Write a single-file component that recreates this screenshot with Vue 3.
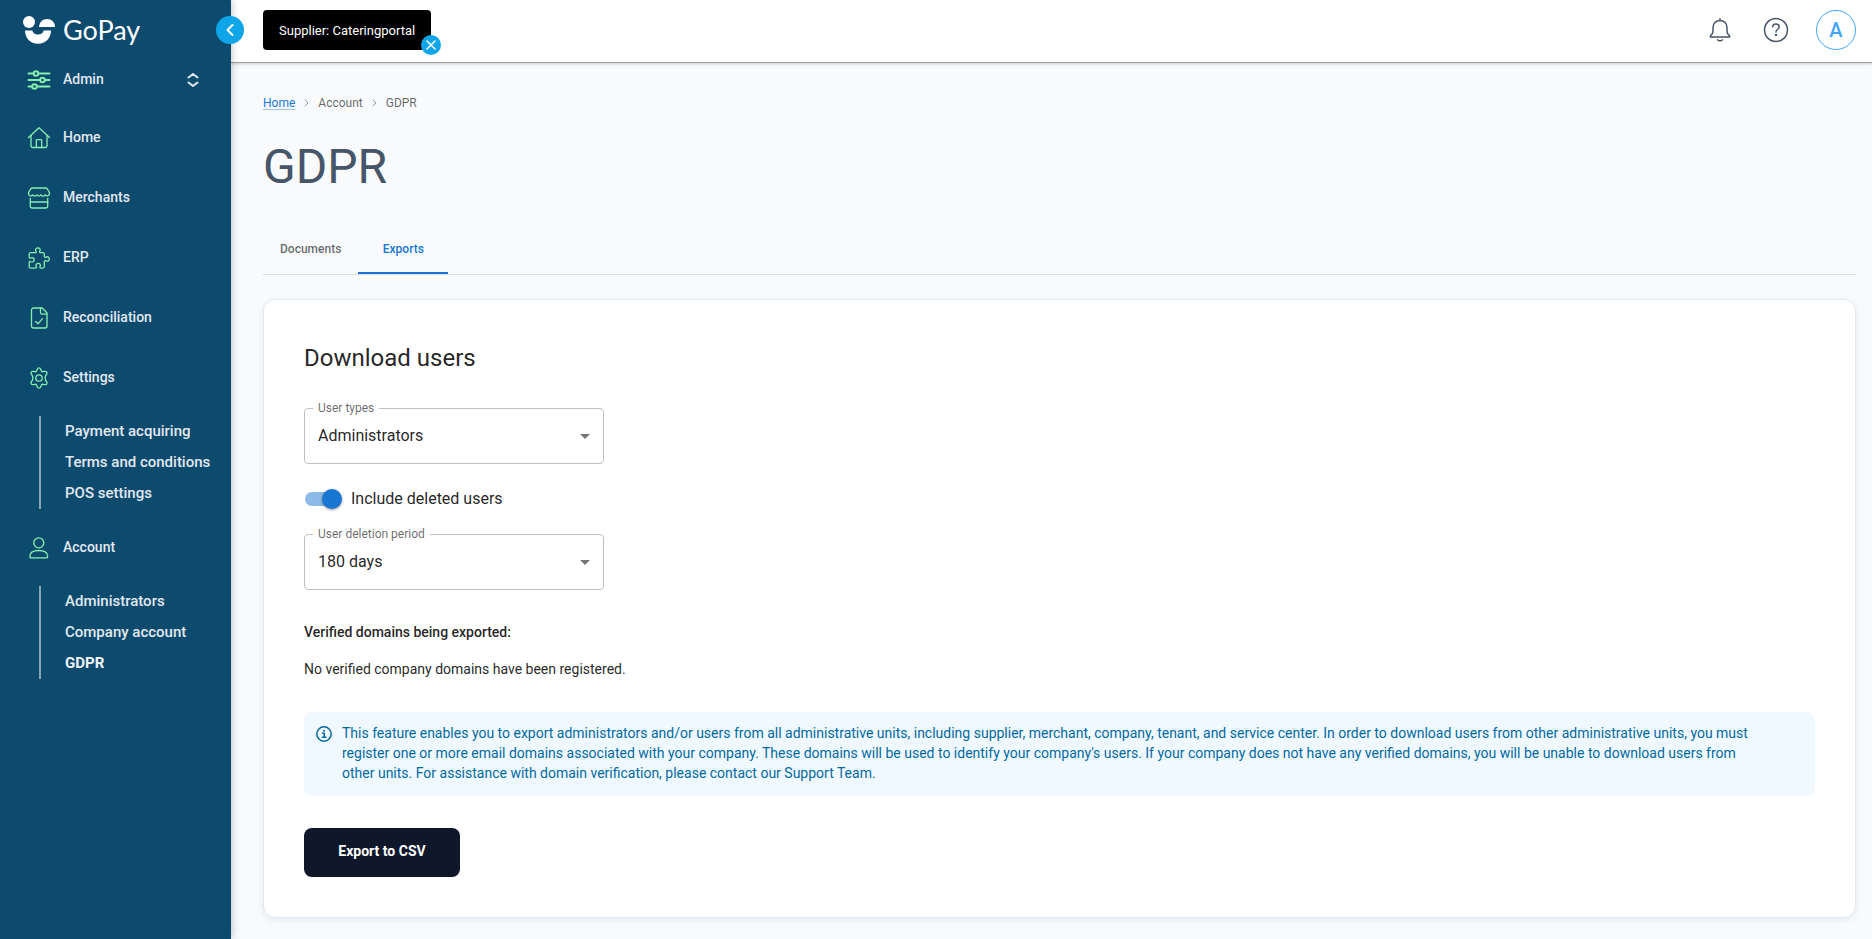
<script setup>
import { ref } from 'vue'

const nav = [
  { label: 'Home', icon: 'home' },
  { label: 'Merchants', icon: 'store' },
  { label: 'ERP', icon: 'puzzle' },
  { label: 'Reconciliation', icon: 'file' },
  { label: 'Settings', icon: 'gear', children: ['Payment acquiring', 'Terms and conditions', 'POS settings'] },
  { label: 'Account', icon: 'user', children: ['Administrators', 'Company account', 'GDPR'] },
]

const icons = {
  home: ['M1.5 11.5 12 1.8l10.500 9.700', 'M4 9.500V19.500a2 2 0 0 0 2 2h12a2 2 0 0 0 2-2V9.500', 'M9.300 21.500v-7a.8.8 0 0 1 .8-.8h3.800a.8.8 0 0 1 .8.8v7'],
  store: ['M5.300 2h13.400a2 2 0 0 1 1.600.9L22.400 6.500q.500 2.500-1.200 3.200-2 .6-2.900-.9-1.100 1.600-2.600 1.300-1.200-.1-1.800-1.300-.7 1.300-1.900 1.300-1.300 0-2-1.300-.7 1.300-1.900 1.300-1.500.1-2.400-1.300-1.200 1.500-2.900.9-1.700-.7-1.200-3.200L3.700 2.900A2 2 0 0 1 5.300 2z', 'M3.300 12.500V20a2 2 0 0 0 2 2h13.400a2 2 0 0 0 2-2v-7.500', 'M3.300 16h17.400'],
  puzzle: ['M2.200 8.200a1.500 1.500 0 0 1 1.500-1.500h4.600c.9 0 1.200-.9.700-1.600-.9-1.500.1-3.300 1.900-3.300s2.800 1.800 1.900 3.300c-.5.7-.2 1.600.7 1.600h2.300a1.500 1.500 0 0 1 1.500 1.500v2.100c0 1 .9 1.300 1.700.8 1.600-.9 3.300.1 3.300 1.900s-1.700 2.800-3.300 1.900c-.8-.5-1.700-.2-1.700.8v4.900a1.500 1.500 0 0 1-1.500 1.500h-2c-.9 0-1.200-.8-.7-1.600.9-1.500-.1-3.200-1.900-3.200s-2.800 1.700-1.900 3.200c.5.8.2 1.600-.7 1.600H3.700a1.500 1.500 0 0 1-1.500-1.500v-4.100c0-1 .9-1.300 1.700-.8 1.600.9 3.300-.1 3.300-1.900s-1.700-2.800-3.300-1.900c-.8.5-1.700.2-1.700-.8z'],
  file: ['M6.500 2h8.700L20 7v13a2 2 0 0 1-2 2H6.500a2 2 0 0 1-2-2V4a2 2 0 0 1 2-2z', 'M13.500 2.200v4.500a1.500 1.500 0 0 0 1.500 1.500h4.800', 'm8.800 15.500 2.400 2.200 4.300-5'],
  gear: ['M10.300 3.200c.6-1.700 2.800-1.700 3.400 0l.5 1.300c.3.9 1.200 1.400 2.100 1.200l1.500-.3c1.700-.3 2.900 1.500 1.800 2.900l-.9 1.200c-.6.7-.6 4.300 0 5l.9 1.200c1.100 1.400-.1 3.200-1.800 2.900l-1.500-.3c-.9-.2-1.800.3-2.100 1.200l-.5 1.300c-.6 1.700-2.800 1.700-3.400 0l-.5-1.300c-.3-.9-1.200-1.400-2.100-1.200l-1.500.3c-1.700.3-2.900-1.500-1.800-2.900l.9-1.200c.6-.7.6-4.300 0-5l-.9-1.200C3.300 6.900 4.500 5.100 6.200 5.400l1.500.3c.9.2 1.800-.3 2.100-1.200z', 'M15.200 12a3.200 3.200 0 1 1-6.400 0 3.200 3.200 0 0 1 6.400 0z'],
  user: ['M16.800 6.800a5 5 0 1 1-10 0 5 5 0 0 1 10 0z', 'M2.800 20.500c0-3.700 3-6 8.900-6s9 2.300 9 6c0 .9-.5 1.400-1.300 1.400H4.100c-.8 0-1.300-.5-1.300-1.400z'],
}

const tab = ref('Exports')
const userType = ref('Administrators')
const includeDeleted = ref(true)
const period = ref('180 days')
</script>

<template>
  <div class="app">
    <aside class="sidebar">
      <a class="logo" href="#" aria-label="GoPay">
        <svg width="32" height="28" viewBox="0 0 32 28" fill="#fff" aria-hidden="true">
          <circle cx="6" cy="6" r="6" />
          <path d="M16 11c.4-4.800 3.500-8 8-8s7.700 3.200 8 7.300q0 .7-.7.7z" />
          <path d="M2 14.500h7.300c.8 2.500 2.500 4 5.700 4s5-1.500 5.700-4H28c0 7.500-5.300 13.300-13 13.300S2 22 2 14.500z" />
        </svg>
        <span>GoPay</span>
      </a>
      <button class="switcher" type="button">
        <svg class="icon" viewBox="0 0 24 24" stroke-width="2" aria-hidden="true">
          <path d="M1.500 5.500h5m5 0h11M1.500 12h11.500m5 0h4.500M1.500 18.500h3.500m5 0h12.500" />
          <circle cx="9" cy="5.500" r="2.300" /><circle cx="15.500" cy="12" r="2.300" /><circle cx="7.500" cy="18.500" r="2.300" />
        </svg>
        <span>Admin</span>
        <svg class="sort" width="12" height="14" viewBox="0 0 12 14" aria-hidden="true"><path d="M1.500 4.500 6 1l4.500 3.500M1.500 9.500 6 13l4.500-3.500" /></svg>
      </button>
      <nav>
        <template v-for="item in nav" :key="item.label">
          <a class="item" href="#">
            <svg class="icon" viewBox="0 0 24 24" stroke-width="1.300" aria-hidden="true">
              <path v-for="d in icons[item.icon]" :key="d" :d="d" />
            </svg>
            <span>{{ item.label }}</span>
          </a>
          <div v-if="item.children" class="sub">
            <a v-for="c in item.children" :key="c" href="#" :class="{ current: c === 'GDPR' }">{{ c }}</a>
          </div>
        </template>
      </nav>
      <button class="collapse" type="button" aria-label="Collapse menu">
        <svg width="28" height="28" viewBox="0 0 28 28" aria-hidden="true"><path d="M16.500 9 11.500 14l5 5" /></svg>
      </button>
    </aside>

    <div class="page">
      <header class="top">
        <div class="context">
          Supplier: Cateringportal
          <button type="button" aria-label="Clear supplier">
            <svg width="20" height="20" viewBox="0 0 20 20" aria-hidden="true"><path d="m6 6 8 8m0-8-8 8" /></svg>
          </button>
        </div>
        <div class="tools">
          <button type="button" aria-label="Notifications">
            <svg width="24" height="24" viewBox="0 0 24 24" aria-hidden="true">
              <path d="M12 .8v1.700M12 2.500c4.200 0 7 3 7 7v3.500c0 2.500 1 3.300 2.300 4.600.8.8.4 1.500-.5 1.500H3.200c-.9 0-1.300-.7-.5-1.500C4 16.300 5 15.500 5 13V9.500c0-4 2.800-7 7-7z" />
              <path d="M9.700 21.800c.8 1.400 3.800 1.400 4.600 0" />
            </svg>
          </button>
          <button type="button" aria-label="Help">
            <svg width="26" height="26" viewBox="0 0 26 26" aria-hidden="true">
              <circle cx="13" cy="13" r="11.500" />
              <path d="M9.700 9.800c0-1.800 1.400-2.800 3.200-2.800s3.300 1 3.300 2.900c0 2.300-3.200 2.400-3.200 5" />
              <circle cx="13" cy="17.900" r=".5" />
            </svg>
          </button>
          <button class="avatar" type="button" aria-label="User menu">A</button>
        </div>
      </header>

      <main>
        <nav class="crumbs" aria-label="Breadcrumb">
          <a href="#">Home</a>
          <svg width="5" height="8" viewBox="0 0 5 8" aria-hidden="true"><path d="m1 1 3 3-3 3" /></svg>
          <span>Account</span>
          <svg width="5" height="8" viewBox="0 0 5 8" aria-hidden="true"><path d="m1 1 3 3-3 3" /></svg>
          <span>GDPR</span>
        </nav>
        <h1>GDPR</h1>
        <div class="tabs" role="tablist">
          <button v-for="t in ['Documents', 'Exports']" :key="t" type="button" role="tab" :aria-selected="tab === t" :class="{ active: tab === t }" @click="tab = t">{{ t }}</button>
        </div>

        <section class="card">
          <h2>Download users</h2>
          <div class="field">
            <label for="types">User types</label>
            <select id="types" v-model="userType"><option>Administrators</option></select>
            <svg width="24" height="24" viewBox="0 0 24 24" aria-hidden="true"><path d="m7 10 5 5 5-5z" /></svg>
          </div>
          <label class="toggle">
            <input v-model="includeDeleted" type="checkbox" role="switch">
            <span>Include deleted users</span>
          </label>
          <div class="field">
            <label for="period">User deletion period</label>
            <select id="period" v-model="period"><option>180 days</option></select>
            <svg width="24" height="24" viewBox="0 0 24 24" aria-hidden="true"><path d="m7 10 5 5 5-5z" /></svg>
          </div>
          <h3>Verified domains being exported:</h3>
          <p class="none">No verified company domains have been registered.</p>
          <div class="alert">
            <svg width="16" height="16" viewBox="0 0 16 16" aria-hidden="true">
              <circle cx="8" cy="8" r="7.200" />
              <path d="M6.500 7.200h1.800v4M6.300 11.200h3.700" /><circle class="dot" cx="8" cy="4.700" r="1" />
            </svg>
            <p>This feature enables you to export administrators and/or users from all administrative units, including supplier, merchant, company, tenant, and service center. In order to download users from other administrative units, you must register one or more email domains associated with your company. These domains will be used to identify your company's users. If your company does not have any verified domains, you will be unable to download users from other units. For assistance with domain verification, please contact our Support Team.</p>
          </div>
          <button class="export" type="button">Export to CSV</button>
        </section>
      </main>
    </div>
  </div>
</template>

<style>
body { background: #f8fafc; }
</style>

<style scoped>
* { box-sizing: border-box; }
.app { display: flex; min-height: 100vh; font-family: Roboto, sans-serif; color: rgba(0, 0, 0, 0.87); background: #f8fafc; }
button { font: inherit; color: inherit; border: 0; padding: 0; background: none; cursor: pointer; }
a { color: inherit; text-decoration: none; }
svg { display: block; flex: none; fill: none; stroke-linecap: round; stroke-linejoin: round; }
h1, h2, h3, p { margin: 0; }

.sidebar { position: relative; z-index: 2; flex: none; width: 231px; background: #0c4a6e; color: #e2e8f0; box-shadow: 0 0 8px rgba(15, 23, 42, 0.3); font-size: 14px; font-weight: 500; }
.logo { display: flex; gap: 8px; height: 52px; padding: 16px 0 0 23px; color: #fff; font: 400 27px/28px Lato, sans-serif; }
.logo svg { fill: #fff; }
.icon { width: 24px; height: 24px; stroke: #86efac; }
.switcher { display: flex; align-items: center; gap: 12px; width: 100%; height: 56px; padding: 0 32px 0 27px; }
.switcher span { flex: 1; text-align: left; }
.sort { stroke: #e2e8f0; stroke-width: 2; }
.item { display: flex; align-items: center; gap: 12px; height: 60px; padding-left: 27px; }
.item span, .switcher span { padding-bottom: 2px; }
.sub { display: flex; flex-direction: column; margin: 8px 0 9px 39px; padding-left: 24px; border-left: 2px solid #86a5b7; font-size: 15px; }
.sub a { height: 31px; line-height: 31px; }
.sub .current { font-weight: 700; color: #f1f5f9; }
.collapse { position: absolute; top: 16px; right: -13px; width: 28px; height: 28px; border-radius: 50%; background: #0ea5e9; }
.collapse svg { stroke: #fff; stroke-width: 2; }

.page { flex: 1; min-width: 0; }
.top { display: flex; align-items: center; justify-content: space-between; height: 63px; padding: 0 16px 2px 32px; background: #fff; border-bottom: 1px solid #9ca3a0; box-shadow: 0 1px 3px rgba(0, 0, 0, 0.2); }
.context { position: relative; height: 40px; padding: 0 16px; border-radius: 4px; background: #000; color: #fff; font-size: 13px; line-height: 41px; }
.context button { position: absolute; right: -10px; bottom: -5px; width: 20px; height: 20px; border-radius: 50%; background: #0ea5e9; }
.context svg { stroke: #fff; stroke-width: 1.500; }
.tools { display: flex; align-items: center; gap: 27px; }
.tools svg { stroke: #475569; stroke-width: 1.500; }
.tools button + button { margin-left: 4px; }
.tools .avatar.avatar { width: 40px; height: 40px; margin-left: 0; border: 1px solid #42a5f5; border-radius: 50%; color: #42a5f5; font-size: 20px; font-weight: 500; }

main { padding: 32px 16px 20px 32px; }
.crumbs { display: flex; align-items: center; gap: 9px; height: 16px; font-size: 12px; line-height: 16px; color: rgba(0, 0, 0, 0.6); }
.crumbs a { color: #1976d2; text-decoration: underline; text-decoration-color: rgba(25, 118, 210, 0.4); text-underline-offset: 2px; }
.crumbs svg { stroke: #94979b; }
h1 { margin-top: 28px; font-size: 48px; font-weight: 400; line-height: 56px; color: #475569; }
.tabs { display: flex; margin-top: 31px; border-bottom: 1px solid #d9dde2; }
.tabs button { min-width: 90px; height: 48px; padding: 0 17px; border-bottom: 2px solid transparent; color: rgba(0, 0, 0, 0.6); font-size: 12px; font-weight: 500; }
.tabs button.active { color: #1976d2; border-color: #1976d2; }

.card { margin-top: 24px; padding: 40px; border: 1px solid #e2e8f0; border-radius: 12px; background: #fff; box-shadow: 0 2px 6px rgba(15, 23, 42, 0.08); }
h2 { font-size: 24px; font-weight: 400; line-height: 36px; }
.field { position: relative; width: 300px; margin-top: 32px; }
.field label { position: absolute; top: -8px; left: 9px; padding: 0 5px; background: #fff; color: rgba(0, 0, 0, 0.6); font-size: 12px; line-height: 16px; }
.field select { display: block; width: 100%; height: 56px; padding: 0 32px 0 13px; border: 1px solid #c0c0c0; border-radius: 4px; background: #fff; color: rgba(0, 0, 0, 0.87); font: 400 16px/24px Roboto, sans-serif; appearance: none; }
.field svg { position: absolute; top: 16px; right: 7px; fill: rgba(0, 0, 0, 0.54); pointer-events: none; }
.toggle { display: flex; align-items: center; gap: 10px; width: max-content; height: 38px; margin-top: 16px; font-size: 16px; }
.toggle span { padding-bottom: 2px; }
.toggle input { display: flex; align-items: center; width: 34px; height: 14px; margin: 0 2px 0 1px; border-radius: 7px; background: #8cbae8; appearance: none; }
.toggle input::before { content: ""; flex: none; width: 20px; height: 20px; border-radius: 50%; background: #fff; box-shadow: 0 1px 3px rgba(0, 0, 0, 0.4); }
.toggle input:checked::before { margin-left: 17px; background: #1976d2; }
.toggle + .field { margin-top: 16px; }
h3 { margin-top: 32px; font-size: 14px; font-weight: 500; line-height: 20px; }
.none { margin-top: 17px; font-size: 14px; line-height: 20px; }
.alert { display: flex; gap: 10px; margin-top: 33px; padding: 11px 48px 13px 12px; border-radius: 8px; background: #f0f9ff; color: #0369a1; font-size: 14px; line-height: 20px; }
.alert svg { margin-top: 3px; stroke: #0369a1; stroke-width: 1.500; }
.alert .dot { fill: #0369a1; stroke: none; }
.export { display: block; min-width: 156px; height: 49px; margin-top: 32px; padding: 0 32px 4px; border-radius: 8px; background: #0f172a; color: #fff; font-size: 14px; font-weight: 700; }
</style>
